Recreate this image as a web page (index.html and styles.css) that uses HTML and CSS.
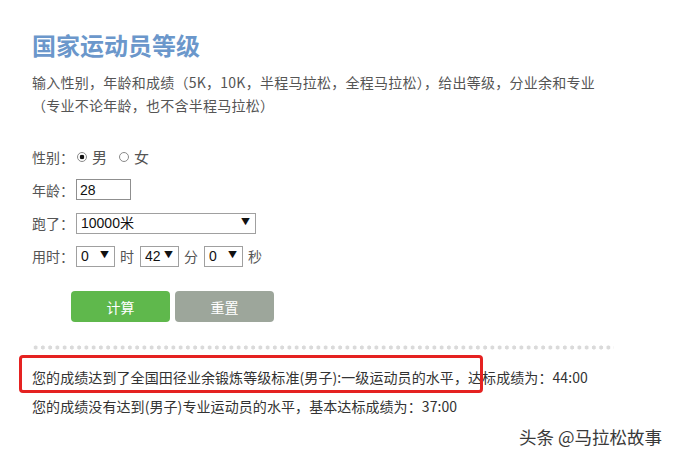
FILE: index.html
```html
<!DOCTYPE html>
<html lang="zh-CN">
<head>
<meta charset="utf-8">
<title>国家运动员等级</title>
<link rel="stylesheet" href="styles.css">
</head>
<body>
<div class="page">
  <h1 class="title">国家运动员等级</h1>
  <p class="desc">输入性别，年龄和成绩（5K，10K，半程马拉松，全程马拉松），给出等级，分业余和专业<br>（专业不论年龄，也不含半程马拉松）</p>

  <form class="form">
    <div class="row">
      <span class="label">性别：</span>
      <label class="opt"><input type="radio" name="sex" class="radio" checked>男</label>
      <label class="opt"><input type="radio" name="sex" class="radio">女</label>
    </div>
    <div class="row">
      <span class="label">年龄：</span>
      <input type="text" class="text-in" value="28">
    </div>
    <div class="row">
      <span class="label">跑了：</span>
      <span class="sel sel-wide"><select><option>10000米</option></select></span>
    </div>
    <div class="row">
      <span class="label">用时：</span>
      <span class="sel sel-small"><select><option>0</option></select></span>
      <span class="unit">时</span>
      <span class="sel sel-small"><select><option>42</option></select></span>
      <span class="unit">分</span>
      <span class="sel sel-small"><select><option>0</option></select></span>
      <span class="unit">秒</span>
    </div>
    <div class="buttons">
      <button type="button" class="btn btn-calc">计算</button>
      <button type="button" class="btn btn-reset">重置</button>
    </div>
  </form>

  <div class="dots"></div>

  <div class="results">
    <p class="res">您的成绩达到了全国田径业余锻炼等级标准(男子):一级运动员的水平，达标成绩为：44:00</p>
    <p class="res">您的成绩没有达到(男子)专业运动员的水平，基本达标成绩为：37:00</p>
    <div class="highlight"></div>
  </div>
</div>
<div class="watermark">头条 @马拉松故事</div>
</body>
</html>
```
FILE: styles.css
```css
html, body {
  margin: 0;
  padding: 0;
  background: #ffffff;
}
body {
  width: 675px;
  height: 460px;
  position: relative;
  overflow: hidden;
  font-family: "Noto Sans CJK SC", "Liberation Sans", sans-serif;
  color: #555;
  font-size: 14px;
}
.page {
  padding: 30px 0 0 32px;
}
.title {
  margin: 0;
  font-size: 24px;
  line-height: 30px;
  font-weight: 700;
  color: #6b97cb;
}
.desc {
  margin: 11px 0 0 0;
  line-height: 23px;
  color: #555;
  letter-spacing: 0.25px;
}
.form {
  margin-top: 23px;
}
.row {
  display: flex;
  align-items: center;
  height: 33px;
  color: #555;
}
.label {
  width: 44px;
}
.opt {
  display: flex;
  align-items: center;
  margin-right: 11px;
  font-size: 15px;
}
.radio {
  appearance: none;
  -webkit-appearance: none;
  width: 10px;
  height: 10px;
  margin: 1px 5px 0 1px;
  border: 1px solid #8a8a8a;
  border-radius: 50%;
  background: #fff;
  box-sizing: border-box;
}
.radio:checked {
  background: radial-gradient(circle, #111 0, #111 2px, #fff 2.6px);
}
.text-in {
  width: 55px;
  height: 21px;
  box-sizing: border-box;
  border: 1px solid #8f8f8f;
  padding: 0 3px;
  margin: 0;
  font-family: "Liberation Sans", "Noto Sans CJK SC", sans-serif;
  font-size: 14px;
  color: #111;
}
.sel {
  position: relative;
  display: inline-block;
  height: 21px;
}
.sel select {
  appearance: none;
  -webkit-appearance: none;
  width: 100%;
  height: 21px;
  box-sizing: border-box;
  border: 1px solid #a0a0a0;
  border-radius: 0;
  background: #fff;
  padding: 0 0 0 4px;
  margin: 0;
  font-family: "Liberation Sans", "Noto Sans CJK SC", sans-serif;
  font-size: 14px;
  color: #111;
}
.sel::after {
  content: "▼";
  position: absolute;
  right: 6px;
  top: 5px;
  font-size: 9px;
  line-height: 10px;
  color: #111;
  pointer-events: none;
}
.sel-wide {
  width: 180px;
}
.sel-small {
  width: 39px;
}
.unit {
  margin: 0 6px 0 5px;
  font-size: 14px;
}
.buttons {
  display: flex;
  gap: 5px;
  margin: 19px 0 0 39px;
}
.btn {
  width: 99px;
  height: 31px;
  border: none;
  border-radius: 4px;
  color: #fff;
  font-family: "Noto Sans CJK SC", sans-serif;
  font-size: 14px;
  padding: 0;
}
.btn-calc {
  background: #5fb84c;
}
.btn-reset {
  background: #9da69b;
}
.dots {
  width: 582px;
  height: 5px;
  margin-top: 23px;
  background-image: radial-gradient(circle, #dadada 0, #dadada 1.8px, transparent 2.3px);
  background-size: 7.25px 5px;
  background-repeat: repeat-x;
}
.results {
  position: relative;
  margin-top: 13px;
  margin-left: -32px;
  padding-left: 32px;
}
.res {
  margin: 0;
  line-height: 29px;
  color: #333;
  letter-spacing: 0.08px;
}
.highlight {
  position: absolute;
  left: 19px;
  top: -8px;
  width: 464px;
  height: 38px;
  box-sizing: border-box;
  border: 3px solid #e52221;
  border-radius: 4px;
}
.watermark {
  position: absolute;
  right: 13px;
  bottom: 12px;
  font-size: 17.5px;
  line-height: 22px;
  color: #3a3a3a;
  text-shadow: 0 0 2px #fff, 0 0 2px #fff, 1px 1px 0 #fff;
}
```
